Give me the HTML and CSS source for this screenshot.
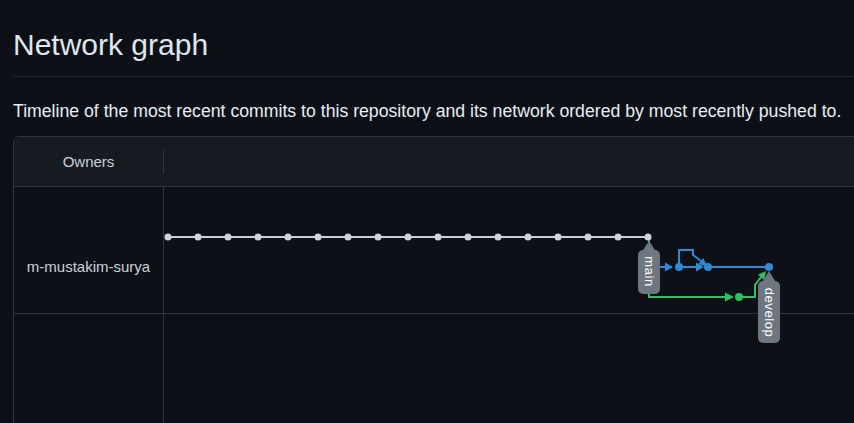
FILE: index.html
```html
<!DOCTYPE html>
<html lang="en">
<head>
<meta charset="utf-8">
<title>Network graph</title>
<link rel="stylesheet" href="styles.css">
</head>
<body>
<div class="page">
  <h1 class="title">Network graph</h1>
  <p class="desc">Timeline of the most recent commits to this repository and its network ordered by most recently pushed to.</p>
  <div class="network">
    <div class="net-head">
      <div class="owner-col">Owners</div>
      <div class="divider"></div>
    </div>
    <div class="net-row first">
      <div class="owner-cell"><span class="owner-name">m-mustakim-surya</span></div>
      <div class="graph-cell">
        <svg class="graph" width="690" height="126" viewBox="0 0 690 126">
          <g transform="translate(-164,-187)">
            <line x1="168" y1="237" x2="649" y2="237" stroke="#c9d1d9" stroke-width="2"/>
            <g fill="none" stroke="#2f8ad6" stroke-width="2">
              <path d="M649 240 V267 H672"/>
              <path d="M683 267 H701"/>
              <path d="M679 267 V250 H693 V255 L701 261"/>
              <path d="M712 267 H766"/>
            </g>
            <g fill="#2f8ad6">
              <polygon points="673,267 665,262.5 665,271.5"/>
              <polygon points="704,267 696,262.5 696,271.5"/>
              <polygon points="707,266 698.2,264.2 703.2,258"/>
              <circle cx="679" cy="267" r="4"/>
              <circle cx="708" cy="267" r="4"/>
              <circle cx="769" cy="267" r="4"/>
            </g>
            <g fill="none" stroke="#2bc35f" stroke-width="2">
              <path d="M649 241 V297 H726"/>
              <path d="M739 297 H755 V285 L761 277"/>
            </g>
            <g fill="#2bc35f">
              <polygon points="734,297 725,292.5 725,301.5"/>
              <polygon points="766,271 764.2,279.8 757.9,274.8"/>
              <circle cx="739" cy="297" r="4"/>
            </g>
            <g fill="#cdd4dc">
              <circle cx="168" cy="237" r="3.5"/>
              <circle cx="198" cy="237" r="3.5"/>
              <circle cx="228" cy="237" r="3.5"/>
              <circle cx="258" cy="237" r="3.5"/>
              <circle cx="288" cy="237" r="3.5"/>
              <circle cx="318" cy="237" r="3.5"/>
              <circle cx="348" cy="237" r="3.5"/>
              <circle cx="378" cy="237" r="3.5"/>
              <circle cx="408" cy="237" r="3.5"/>
              <circle cx="438" cy="237" r="3.5"/>
              <circle cx="468" cy="237" r="3.5"/>
              <circle cx="498" cy="237" r="3.5"/>
              <circle cx="528" cy="237" r="3.5"/>
              <circle cx="558" cy="237" r="3.5"/>
              <circle cx="588" cy="237" r="3.5"/>
              <circle cx="618" cy="237" r="3.5"/>
              <circle cx="648" cy="237" r="3.5"/>
            </g>
            <g fill="#6e7681">
              <polygon points="649,241 641,253 657,253"/>
              <rect x="638" y="250" width="22" height="44" rx="5"/>
              <polygon points="769,271 761,284 777,284"/>
              <rect x="758" y="281" width="22" height="62" rx="5"/>
            </g>
            <g class="label-text" fill="#ffffff">
              <text transform="translate(649,271.5) rotate(90)" text-anchor="middle" dominant-baseline="central">main</text>
              <text transform="translate(769,312.5) rotate(90)" text-anchor="middle" dominant-baseline="central">develop</text>
            </g>
          </g>
        </svg>
      </div>
    </div>
    <div class="net-row second">
      <div class="owner-cell"></div>
      <div class="graph-cell"></div>
    </div>
  </div>
</div>
</body>
</html>
```
FILE: styles.css
```css
html, body {
  margin: 0;
  padding: 0;
}
body {
  background: #0d1117;
  color: #e6edf3;
  font-family: "Liberation Sans", Arial, sans-serif;
  overflow: hidden;
  height: 423px;
}
.page {
  padding-left: 13px;
  width: 900px;
}
.title {
  margin: 0;
  padding: 26px 0 12px;
  font-size: 30px;
  line-height: 38px;
  font-weight: 400;
  color: #dfe6ee;
  border-bottom: 1px solid #21262d;
}
.desc {
  margin: 22px 0 13px;
  font-size: 17.68px;
  line-height: 24px;
  color: #e6edf3;
}
.network {
  border: 1px solid #30363d;
  border-radius: 6px;
  width: 880px;
  height: 400px;
}
.net-head {
  display: flex;
  align-items: center;
  height: 49px;
  background: #161b22;
  border-bottom: 1px solid #30363d;
  border-radius: 6px 6px 0 0;
}
.owner-col {
  width: 149px;
  text-align: center;
  font-size: 15px;
  color: #c9d1d9;
}
.divider {
  width: 1px;
  height: 25px;
  background: #30363d;
}
.net-row {
  display: flex;
}
.net-row.first {
  height: 126px;
  border-bottom: 1px solid #30363d;
}
.net-row.second {
  height: 200px;
}
.owner-cell {
  box-sizing: border-box;
  flex: 0 0 150px;
  border-right: 1px solid #30363d;
  text-align: center;
}
.first .owner-cell {
  padding-top: 71px;
}
.owner-name {
  display: block;
  font-size: 15px;
  line-height: 18px;
  color: #c9d1d9;
}
.graph-cell {
  flex: 1;
}
.graph {
  display: block;
  overflow: visible;
  position: relative;
  z-index: 1;
}
.label-text {
  font-family: "Liberation Sans", Arial, sans-serif;
  font-size: 13px;
  letter-spacing: 0.6px;
}
```
